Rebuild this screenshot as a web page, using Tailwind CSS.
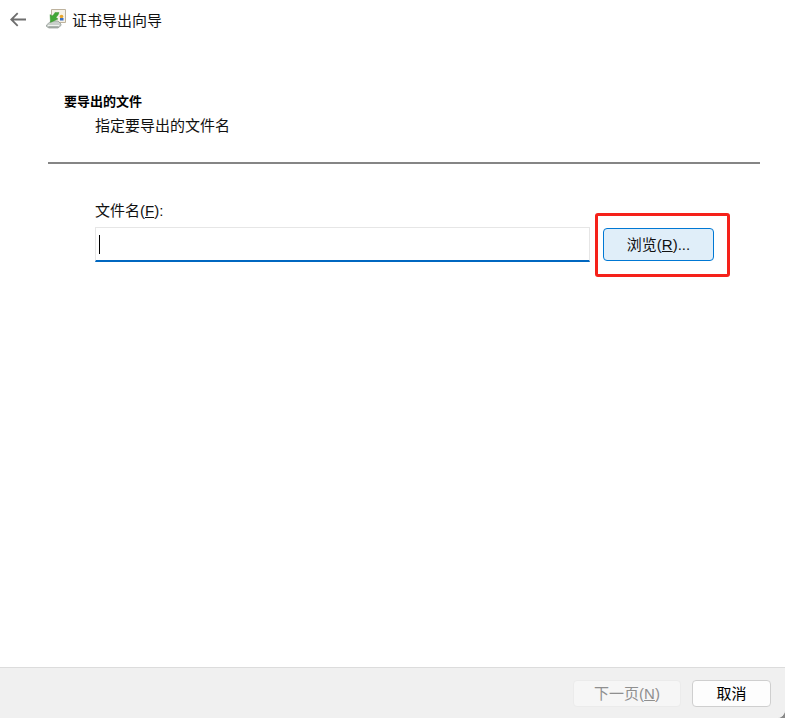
<!DOCTYPE html>
<html lang="zh-CN">
<head>
<meta charset="UTF-8">
<title>证书导出向导</title>
<script src="https://cdn.jsdelivr.net/npm/@tailwindcss/browser@4"></script>
</head>
<body class="bg-[#8a8a8a]">
<div class="w-[785px] h-[718px] bg-white flex flex-col overflow-hidden rounded-br-lg font-['Liberation_Sans','Noto_Sans_CJK_SC',sans-serif] text-[#111111]">
  <!-- 标题栏 -->
  <div class="h-[40px] flex items-center shrink-0">
    <svg class="ml-[10px] w-[16px] h-[16px]" viewBox="0 0 16 16" fill="none" stroke="#6e6e6e" stroke-width="1.800">
      <path d="M16 7.500H1.300M7.700 1.200L1.300 7.500l6.400 6.300"/>
    </svg>
    <svg class="ml-[20px] -mt-[2px] w-[20px] h-[20px]" viewBox="0 0 20 20">
      <path d="M5.500.5h14v13h-14z" fill="#f6f2e8" stroke="#bdb29d"/>
      <path d="M.5 16l4.500-4h7l3 3v1.500l-3 2.500h-9l-2.500-1.500z" fill="#c9cfca" stroke="#8d958f" stroke-width=".7"/>
      <path d="M2 16.500h11" stroke="#f0f3f0"/>
      <path d="M2.500 18h10" stroke="#7d8580" stroke-width=".8"/>
      <path d="M9 3.500h4c-.5 2-1.500 3.500-3 5l2 1.500-7.500 3.500-.5-8 2 1.500c1.300-1 2.300-2 3-3.500z" fill="#43a835" stroke="#2f8a28" stroke-width=".4"/>
      <circle cx="15.500" cy="7.500" r="1.800" fill="#e9a62c"/>
      <path d="M14 9h3.500v2.500H14z" fill="#3a6fc4"/>
    </svg>
    <span class="ml-[6px] text-[15px] leading-none">证书导出向导</span>
  </div>

  <!-- 内容 -->
  <div class="flex-1 relative">
    <div class="mt-[53px] ml-[64px] text-[13px] leading-[18px] font-bold text-black">要导出的文件</div>
    <div class="mt-[4px] ml-[95px] text-[15px] leading-[22px]">指定要导出的文件名</div>
    <div class="mt-[25px] ml-[48px] mr-[25px] h-[2px] bg-[#858585]"></div>
    <div class="mt-[36px] ml-[95px] text-[15px] leading-[22px]">文件名(<span class="underline">F</span>):</div>
    <div class="mt-[5px] ml-[95px] flex items-center">
      <div class="w-[495px] h-[35px] bg-white border border-[#e6e6e6] border-b-2 border-b-[#0067c0] flex items-center pl-[3px]">
        <div class="w-px h-[19px] bg-black"></div>
      </div>
      <button class="ml-[13px] w-[111px] h-[33px] bg-[#e0eef9] border border-[#0078d4] rounded-[4px] text-[15px] leading-none text-[#111111]">浏览(<span class="underline">R</span>)...</button>
    </div>
    <!-- 红框标注 -->
    <div class="absolute left-[595px] top-[173px] w-[135px] h-[64px] border-[3px] border-[#f5211a] rounded-[3px]"></div>
  </div>

  <!-- 底栏 -->
  <div class="h-[51px] shrink-0 bg-[#f0f0f0] border-t border-[#dcdcdc] flex items-center justify-end pr-[14px] gap-[11px]">
    <button class="w-[108px] h-[27px] bg-[#f6f6f6] border border-[#ebebeb] rounded-[4px] text-[15px] leading-none text-[#8f8f8f]">下一页(<span class="underline">N</span>)</button>
    <button class="w-[79px] h-[27px] bg-[#fdfdfd] border border-[#cfcfcf] rounded-[4px] text-[15px] leading-none text-black">取消</button>
  </div>
</div>
</body>
</html>
